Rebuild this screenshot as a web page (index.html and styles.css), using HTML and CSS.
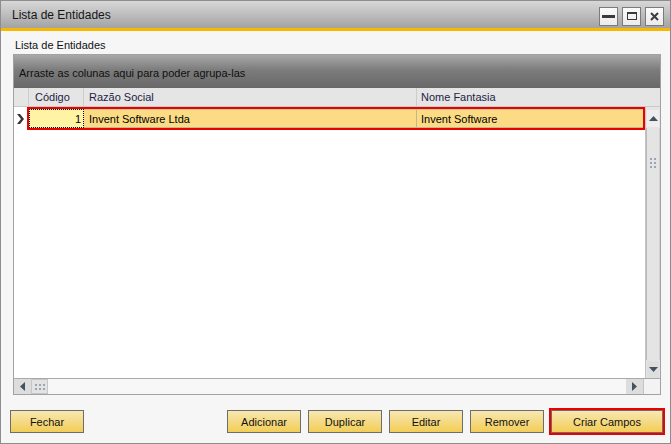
FILE: index.html
```html
<!DOCTYPE html>
<html>
<head>
<meta charset="utf-8">
<link rel="stylesheet" href="styles.css">
</head>
<body>
<div class="window">
  <div class="titlebar">
    <span class="title">Lista de Entidades</span>
    <div class="controls">
      <div class="ctl"><span class="min-bar"></span></div>
      <div class="ctl"><span class="max-box"></span></div>
      <div class="ctl">
        <svg width="9" height="9" viewBox="0 0 9 9"><path d="M1 1 L8 8 M8 1 L1 8" stroke="#3c3c3c" stroke-width="2" fill="none"/></svg>
      </div>
    </div>
  </div>
  <div class="accent"></div>
  <div class="content">
    <div class="label">Lista de Entidades</div>
    <div class="grid">
      <div class="groupbar">Arraste as colunas aqui para poder agrupa-las</div>
      <div class="header">
        <div class="hcell h0"></div>
        <div class="hcell h1">Código</div>
        <div class="hcell h2">Razão Social</div>
        <div class="hcell h3">Nome Fantasia</div>
      </div>
      <div class="main">
        <div class="rows">
          <div class="row">
            <div class="ind">
              <svg width="7" height="10" viewBox="0 0 7 10"><polygon points="0,0 3,0 7,5 3,10 0,10 4,5" fill="#333"/></svg>
            </div>
            <div class="sel">
              <div class="cell c1">1</div>
              <div class="cell c2">Invent Software Ltda</div>
              <div class="cell c3">Invent Software</div>
            </div>
          </div>
        </div>
        <div class="vscroll">
          <div class="vbtn">
            <svg width="9" height="5" viewBox="0 0 9 5"><polygon points="0,5 9,5 4.5,0" fill="#44525f"/></svg>
          </div>
          <div class="thumb">
            <div class="dots v">
              <i></i><i></i><i></i><i></i><i></i><i></i>
            </div>
          </div>
          <div class="vbtn down">
            <svg width="9" height="5" viewBox="0 0 9 5"><polygon points="0,0 9,0 4.5,5" fill="#44525f"/></svg>
          </div>
        </div>
      </div>
      <div class="hscroll">
        <div class="hbtn">
          <svg width="5" height="9" viewBox="0 0 5 9"><polygon points="5,0 5,9 0,4.5" fill="#44525f"/></svg>
        </div>
        <div class="hgrip">
          <div class="dots h">
            <i></i><i></i><i></i><i></i><i></i><i></i>
          </div>
        </div>
        <div class="htrack"></div>
        <div class="hbtn">
          <svg width="5" height="9" viewBox="0 0 5 9"><polygon points="0,0 0,9 5,4.5" fill="#44525f"/></svg>
        </div>
        <div class="corner"></div>
      </div>
    </div>
    <div class="footer">
      <div class="btn">Fechar</div>
      <div class="spacer"></div>
      <div class="btn">Adicionar</div>
      <div class="btn">Duplicar</div>
      <div class="btn">Editar</div>
      <div class="btn">Remover</div>
      <div class="btn wide">Criar Campos</div>
    </div>
  </div>
</div>
</body>
</html>
```
FILE: styles.css
```css
* { box-sizing: border-box; }
html, body { margin: 0; padding: 0; }
body {
  width: 671px;
  height: 444px;
  overflow: hidden;
  font-family: "Liberation Sans", Tahoma, sans-serif;
  font-size: 11px;
  color: #000;
  background: #fff;
}
.window {
  width: 671px;
  height: 444px;
  border: 1px solid #8d8d8d;
  display: flex;
  flex-direction: column;
  background: #f6f6f6;
}
.titlebar {
  height: 27px;
  flex: none;
  display: flex;
  align-items: center;
  background: linear-gradient(#d8d8d8, #a3a3a3);
  padding: 0 6px 0 11px;
}
.title { font-size: 12px; color: #151515; padding-top: 1px; }
.controls { margin-left: auto; display: flex; gap: 4px; margin-top: 3px; }
.ctl {
  width: 19px;
  height: 19px;
  border: 1px solid #7b7b7b;
  background: linear-gradient(#fbfbfb, #ebebeb);
  display: flex;
  align-items: center;
  justify-content: center;
}
.min-bar { width: 13px; height: 3px; background: #3a3a3a; }
.max-box { width: 10px; height: 8px; border: 1px solid #3a3a3a; border-top-width: 2px; }
.accent { height: 3px; flex: none; background: #f7b800; }
.content {
  flex: 1;
  display: flex;
  flex-direction: column;
  padding: 7px 9px 0 12px;
}
.label { height: 14px; line-height: 14px; margin: 0 0 2px 2px; color: #111; }
.grid {
  height: 341px;
  flex: none;
  border: 1px solid #a2a2a2;
  display: flex;
  flex-direction: column;
  background: #fff;
}
.groupbar {
  height: 33px;
  flex: none;
  display: flex;
  align-items: center;
  padding: 3px 0 0 5px;
  color: #101010;
  background: linear-gradient(#a9a9a9, #7c7c7c 45%, #686868);
}
.header {
  height: 19px;
  flex: none;
  display: flex;
  background: #e5e5e5;
  border-bottom: 1px solid #c9c9c9;
  color: #1d1d45;
}
.hcell {
  display: flex;
  align-items: center;
  padding-left: 5px;
  border-right: 1px solid #cdcdcd;
}
.h0 { width: 15px; }
.h1 { width: 55px; padding-left: 6px; }
.h2 { width: 333px; }
.h3 { flex: 1; padding-left: 4px; border-right: none; }
.main { flex: 1; display: flex; min-height: 0; }
.rows { flex: 1; background: #fff; }
.row { display: flex; height: 23px; }
.ind { width: 13px; display: flex; align-items: center; padding-left: 3px; }
.sel {
  flex: 1;
  display: flex;
  border: 2px solid #eb0000;
  background: #fbdc84;
}
.cell {
  display: flex;
  align-items: center;
  border-right: 1px solid #c2b78f;
  border-top: 1px solid #d2c79c;
  border-bottom: 1px solid #c2b78f;
}
.c1 {
  width: 55px;
  justify-content: flex-end;
  padding-right: 2px;
  background: #fff3a4;
  border: 1px dotted #000;
}
.c2 { width: 333px; padding-left: 5px; }
.c3 { flex: 1; padding-left: 4px; border-right: none; }
.vscroll {
  width: 15px;
  flex: none;
  display: flex;
  flex-direction: column;
  background: #e4e4e4;
  border-left: 1px solid #c3c3c3;
}
.vbtn {
  height: 17px;
  flex: none;
  margin: 3px 1px 0 1px;
  display: flex;
  align-items: center;
  justify-content: center;
  background: #eeeeee;
}
.vbtn.down { margin: 0 1px 0 1px; background: #dedede; }
.thumb {
  flex: 1;
  margin: 1px 0;
  border-left: 1px solid #b9b9b9;
  border-right: 1px solid #d2d2d2;
  display: flex;
  justify-content: center;
  padding-top: 30px;
}
.dots { display: grid; gap: 2px; }
.dots i { display: block; width: 2px; height: 2px; background: #9aa6b6; }
.dots.v { grid-template-columns: 2px 2px; height: 10px; }
.dots.h { grid-template-columns: 2px 2px 2px; }
.hscroll {
  height: 16px;
  flex: none;
  display: flex;
  border-top: 1px solid #a9a9a9;
  background: #f7f7f7;
}
.hbtn {
  width: 17px;
  display: flex;
  align-items: center;
  justify-content: center;
  background: #dddddd;
}
.hgrip {
  width: 17px;
  display: flex;
  align-items: center;
  justify-content: center;
  background: #e3e3e3;
  border: 1px solid #c6c6c6;
}
.htrack { flex: 1; }
.corner { width: 17px; background: #f3f3f3; border-left: 1px solid #c3c3c3; }
.footer {
  display: flex;
  gap: 7px;
  margin: 15px -2px 0 -3px;
}
.spacer { flex: 1; }
.btn {
  width: 74px;
  height: 23px;
  border: 1px solid #6d6d6d;
  background: linear-gradient(#f8e7b2, #f2cd56);
  display: flex;
  align-items: center;
  justify-content: center;
  color: #111;
}
.btn.wide { width: 112px; outline: 2px solid #ea0000; }
```
